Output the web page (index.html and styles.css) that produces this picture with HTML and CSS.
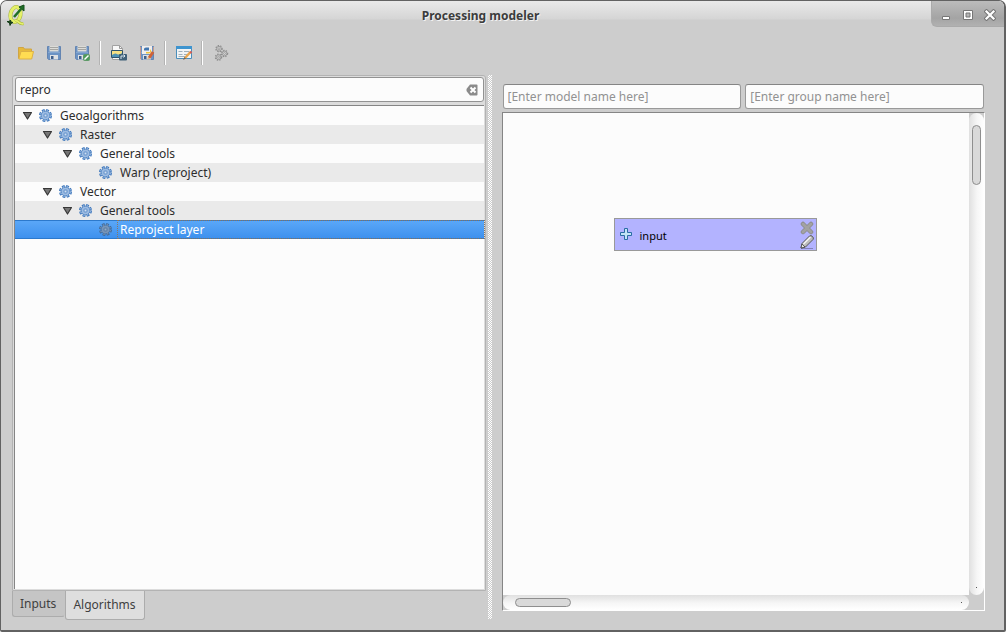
FILE: index.html
```html
<!DOCTYPE html>
<html lang="en">
<head>
<meta charset="utf-8">
<title>Processing modeler</title>
<link rel="stylesheet" href="styles.css">
</head>
<body>
<svg class="defs" aria-hidden="true">
  <symbol id="gear" viewBox="0 0 13 13">
    <circle cx="6.5" cy="6.5" r="5.3" fill="none" stroke="#3f78bd" stroke-width="2.4" stroke-dasharray="2.7 1.463"/>
    <circle cx="6.5" cy="6.5" r="4.4" fill="#9dbce2" stroke="#4a80c1"/>
    <circle cx="6.5" cy="6.5" r="4.9" fill="none" stroke="#9dbce2" stroke-width="1.4" stroke-dasharray="1.1 2.748" stroke-dashoffset="-.7"/>
    <rect x="5" y="5" width="3" height="3" rx=".8" fill="#cfe0f2" stroke="#5c8cc8"/>
  </symbol>
  <symbol id="arrow" viewBox="0 0 11 9">
    <path d="M1.5 1.5h8L5.5 8z" fill="#777" stroke="#383838" stroke-width="1.2" stroke-linejoin="round"/>
  </symbol>
  <symbol id="floppy" viewBox="0 0 16 16">
    <path d="M1.5 1.5h13v13H2.6l-1.1-1.1z" fill="#6c93c4" stroke="#6485b2"/>
    <path d="M3.5 1h9v5.5h-9z" fill="#dcdcd8"/>
    <path d="M4 2.5h8M4 4.5h8" stroke="#a5a5a2"/>
    <path d="M2 7.5h12" stroke="#83a6d0"/>
    <path d="M4 10h8v4.5H4z" fill="#dfe1e3"/>
    <path d="M5 11h2.5v3H5z" fill="#3e5f8c"/>
  </symbol>
</svg>
<div class="window">
  <header class="titlebar">
    <svg class="logo" viewBox="0 0 20 22">
      <ellipse cx="8.5" cy="10.500" rx="5" ry="7.500" transform="rotate(12 8.500 10.500)" fill="none" stroke="#a5b13c" stroke-width="4"/>
      <ellipse cx="8.5" cy="10.500" rx="5" ry="7.500" transform="rotate(12 8.500 10.500)" fill="none" stroke="#e4f06a" stroke-width="3"/>
      <path d="M8 16.500c3-1 4 4.500 8.500 3" fill="none" stroke="#a5b13c" stroke-width="3"/>
      <path d="M8 16.500c3-1 4 4.500 8.500 3" fill="none" stroke="#e4f06a" stroke-width="2"/>
      <path d="M7 13L14 5" stroke="#1f7026" stroke-width="2.500"/>
      <path d="M17 1v6l-5-4z" fill="#1f7026" stroke="#174f1c"/>
      <path d="M0 17.500h2l1.500-1.500.5 2 2 .5-2 1-1 2-.5-2.500z" fill="#173f1a" stroke="#173f1a"/>
    </svg>
    <h1 class="title">Processing modeler</h1>
    <div class="window-buttons">
      <button aria-label="Minimize"><svg viewBox="0 0 12 12"><path d="M2.500 7.500h7v3h-7z" fill="#fff" stroke="#777"/></svg></button>
      <button aria-label="Maximize"><svg viewBox="0 0 12 12"><path d="M1.500 1.500h9v9h-9z" fill="#fff" stroke="#777"/><path d="M4 4h4v4H4z" fill="#b5b5b5" stroke="#777"/></svg></button>
      <button aria-label="Close"><svg viewBox="0 0 12 12"><path d="M2.500 2.500l7 7m0-7l-7 7" stroke="#777" stroke-width="4.200" stroke-linecap="square"/><path d="M2.500 2.500l7 7m0-7l-7 7" stroke="#fff" stroke-width="2.200" stroke-linecap="square"/></svg></button>
    </div>
  </header>

  <nav class="toolbar" aria-label="Model tools">
    <button aria-label="Open model"><svg viewBox="0 0 16 16"><path d="M.5 13.500v-11h5l1 1.500h7v3" fill="#e6b93c" stroke="#cfa544"/><path d="M.800 14L3 6.500h12.500l-1.800 7.500z" fill="#ffdc52" stroke="#dcb145"/></svg></button>
    <button aria-label="Save model"><svg><use href="#floppy"/></svg></button>
    <button aria-label="Save model as"><svg viewBox="0 0 16 16"><use href="#floppy"/><rect x="9.500" y="9.500" width="6" height="6" rx="1" fill="#4d9a5b" stroke="#5f9a68"/><path d="M10.500 14.500l4-4" stroke="#fff" stroke-width="1.500"/></svg></button>
    <span class="separator"></span>
    <button aria-label="Export as image"><svg viewBox="0 0 16 16"><path d="M1.500.500h7l3 3v11h-10z" fill="#f8f8f8" stroke="#a2a2a2"/><path d="M8.500.500v3h3" fill="none" stroke="#999"/><path d="M.5 5.500h11v7H.500z" fill="#f5df83" stroke="#2d536d"/><path d="M1 10q3-2.500 5-1t5-1v4H1z" fill="#4d91b5"/><rect x="8" y="9" width="8" height="6.500" rx="1" fill="#3f6079"/><path d="M10 14v-3h4m-1.500-1.500l1.500 1.500-1.500 1.500" fill="none" stroke="#d7e5ee"/></svg></button>
    <button aria-label="Export as Python script"><svg viewBox="0 0 16 16"><use href="#floppy"/><path d="M3 1h10v8H3z" fill="#f0eeee"/><path d="M5 5.500V4q0-1.500 2-1.500h3v3z" fill="#4277b0"/><path d="M7 7h4V4q3 3-1 4.500H7z" fill="#edc43f"/><path d="M14 7L10 13" stroke="#d06238" stroke-width="3"/><path d="M9 12l-1 3 3-1.500z" fill="#e2b78e"/><path d="M1.500 2v12M14.500 2v5" stroke="#c89a8c"/></svg></button>
    <span class="separator"></span>
    <button aria-label="Edit model help"><svg viewBox="0 0 16 16"><path d="M.5 1.500h15v12H.500z" fill="#f1f4f5" stroke="#4a8ebb"/><path d="M0 1h16v3H0z" fill="#3e94cf"/><path d="M2.500 6.500h4m1.500 0h5m-10.500 3h4m1.500 0h4m-9.500 2h7" stroke="#9eb0bb"/><path d="M14.500 7L9 13" stroke="#e8a64e" stroke-width="2.500"/><path d="M14 6.500l1.500 1.500" stroke="#d35c56" stroke-width="2"/><path d="M8.500 12l-1.500 3 3-1.500z" fill="#76604b"/></svg></button>
    <span class="separator"></span>
    <button aria-label="Run model"><svg viewBox="0 0 16 16" fill="#d0d0d0" stroke="#8e8e8e"><g stroke-dasharray="1.300 1.200" stroke-width="1.500"><circle cx="6" cy="3.700" r="3"/><circle cx="11.500" cy="8.500" r="3"/><circle cx="5.500" cy="12.200" r="3"/></g><g stroke-width=".8"><circle cx="6" cy="3.700" r="2.400"/><circle cx="11.500" cy="8.500" r="2.400"/><circle cx="5.500" cy="12.200" r="2.400"/></g><g fill="#eee" stroke-width=".8"><circle cx="6" cy="3.700" r=".9"/><circle cx="11.500" cy="8.500" r=".9"/><circle cx="5.500" cy="12.200" r=".9"/></g></svg></button>
  </nav>

  <main class="workspace">
    <section class="palette">
      <div class="palette-page">
        <div class="search">
          <input type="text" value="repro" aria-label="Search algorithms">
          <button aria-label="Clear search"><svg viewBox="0 0 12 12"><path d="M4 .5h6.500q1 0 1 1v9q0 1-1 1H4L.500 7V5z" fill="#8b8b8b"/><path d="M4.500 3.500l5 5m0-5l-5 5" stroke="#fff" stroke-width="2"/></svg></button>
        </div>
        <ul class="tree" role="tree" aria-label="Algorithms">
          <li class="row level-0" role="treeitem" aria-level="1"><button class="toggle" aria-label="Collapse"><svg><use href="#arrow"/></svg></button><svg class="gear"><use href="#gear"/></svg><span class="label">Geoalgorithms</span></li>
          <li class="row level-1" role="treeitem" aria-level="2"><button class="toggle" aria-label="Collapse"><svg><use href="#arrow"/></svg></button><svg class="gear"><use href="#gear"/></svg><span class="label">Raster</span></li>
          <li class="row level-2" role="treeitem" aria-level="3"><button class="toggle" aria-label="Collapse"><svg><use href="#arrow"/></svg></button><svg class="gear"><use href="#gear"/></svg><span class="label">General tools</span></li>
          <li class="row leaf" role="treeitem" aria-level="4"><svg class="gear"><use href="#gear"/></svg><span class="label">Warp (reproject)</span></li>
          <li class="row level-1" role="treeitem" aria-level="2"><button class="toggle" aria-label="Collapse"><svg><use href="#arrow"/></svg></button><svg class="gear"><use href="#gear"/></svg><span class="label">Vector</span></li>
          <li class="row level-2" role="treeitem" aria-level="3"><button class="toggle" aria-label="Collapse"><svg><use href="#arrow"/></svg></button><svg class="gear"><use href="#gear"/></svg><span class="label">General tools</span></li>
          <li class="row leaf selected" role="treeitem" aria-level="4" aria-selected="true"><svg class="gear"><use href="#gear"/></svg><span class="label">Reproject layer</span></li>
        </ul>
      </div>
      <div class="tabs" role="tablist">
        <button class="tab" role="tab" aria-selected="false">Inputs</button>
        <button class="tab active" role="tab" aria-selected="true">Algorithms</button>
      </div>
    </section>

    <div class="splitter" role="separator" aria-orientation="vertical"></div>

    <section class="editor">
      <div class="names">
        <input type="text" placeholder="[Enter model name here]" aria-label="Model name">
        <input type="text" placeholder="[Enter group name here]" aria-label="Group name">
      </div>
      <div class="viewport">
        <div class="canvas">
          <div class="node">
            <svg class="plus" viewBox="0 0 12 12"><path d="M4.500.500h3v4h4v3h-4v4h-3v-4h-4v-3h4z" fill="#c2e4f6" stroke="#2b6ca5"/></svg>
            <span class="node-label">input</span>
            <span class="node-actions">
              <button aria-label="Delete input"><svg viewBox="0 0 14 14"><path d="M3 3l8 8m0-8l-8 8" stroke="#8a8a8a" stroke-width="4.500" stroke-linecap="round"/><path d="M3 3l8 8m0-8l-8 8" stroke="#a2a2a2" stroke-width="3" stroke-linecap="round"/></svg></button>
              <button aria-label="Edit input"><svg viewBox="0 0 14 14"><path d="M1 13.500h12" stroke="#8383b8"/><path d="M1 13l1-4.500L9.500 1q1.500-1 3 .5t.5 3L5.500 12z" fill="#bdbdbd" stroke="#555"/><path d="M3.500 9l7-7" stroke="#f5f5f5" stroke-width="1.500"/><path d="M2 9l3 3-4 1z" fill="#eee" stroke="#444" stroke-width=".8"/></svg></button>
            </span>
          </div>
        </div>
        <div class="scrollbar vertical"><span class="thumb"></span><span class="dot"></span></div>
        <div class="scrollbar horizontal"><span class="thumb"></span><span class="dot"></span></div>
        <div class="corner"></div>
      </div>
    </section>
  </main>
</div>
</body>
</html>
```
FILE: styles.css
```css
* { box-sizing: border-box; }

body {
  margin: 0;
  background: #fff;
  color: #2d2d2d;
  font: 12px/18px "Noto Sans", "Open Sans", sans-serif;
}

button, input { font: inherit; color: inherit; }
button { padding: 0; border: 0; background: none; }
svg { display: block; }
.defs { position: absolute; width: 0; height: 0; }

.window {
  display: flex;
  flex-direction: column;
  min-height: 100vh;
  border: 1px solid #626262;
  border-bottom-width: 2px;
  border-right-width: 2px;
  border-radius: 7px 7px 2px 2px;
  background: #cdcdcd;
  overflow: hidden;
}

/* Title bar */
.titlebar {
  display: grid;
  grid-template-columns: 74px 1fr 73px;
  align-items: start;
  height: 32px;
  background: linear-gradient(#e9e9e9, #d5d5d5 18px, #cdcdcd 19px);
}
.logo { width: 20px; height: 22px; margin: 3px 0 0 6px; }
.title {
  margin: 0;
  padding: 6px 45px 0 0;
  font-size: 12px;
  line-height: 18px;
  font-weight: 700;
  text-align: center;
  color: #3c3c3c;
  text-shadow: 1px 1px #f2f2f2;
}
.window-buttons {
  display: flex;
  align-items: flex-start;
  justify-content: flex-end;
  gap: 10px;
  height: 26px;
  padding: 8px 8px 0 0;
  border: 1px solid #aaa;
  border-width: 0 0 1px 1px;
  border-radius: 0 0 0 6px;
  background: linear-gradient(#bcbcbc, #a4a4a4 17px, #b1b1b1);
}
.window-buttons svg { width: 12px; height: 12px; }

/* Toolbar */
.toolbar {
  display: flex;
  align-items: center;
  height: 40px;
  padding-left: 11px;
}
.toolbar button { padding: 0 6px; }
.toolbar svg { width: 16px; height: 16px; }
.separator {
  width: 2px;
  height: 24px;
  margin: 0 4px 0 3px;
  border-left: 1px solid #b3b3b3;
  border-right: 1px solid #fff;
}

/* Workspace */
.workspace { flex: 1; display: flex; padding: 2px 19px 11px 11px; }

.palette { flex: 474 1 0; display: flex; flex-direction: column; }
.palette-page {
  flex: 1;
  display: flex;
  flex-direction: column;
  gap: 3px;
  padding: 1px;
  border: 1px solid #b3b3b3;
  border-radius: 3px 3px 0 0;
  background: #dcdcdc;
}
.search {
  display: flex;
  align-items: center;
  height: 25px;
  margin-left: 1px;
  padding-right: 5px;
  border: 1px solid #929292;
  border-radius: 3px;
  background: #fcfcfc;
}
.search input {
  flex: 1;
  min-width: 0;
  padding: 0 4px;
  border: 0;
  outline: 0;
  background: none;
}
.search svg { width: 12px; height: 12px; }

.tree {
  flex: 1;
  margin: 0;
  padding: 0;
  border-top: 1px solid #858585;
  border-left: 1px solid #858585;
  background: #fcfcfc;
  list-style: none;
}
.row { display: flex; align-items: center; height: 19px; }
.row:nth-child(even) { background: #eaeaea; }
.level-0 { padding-left: 7px; }
.level-1 { padding-left: 27px; }
.level-2 { padding-left: 47px; }
.leaf { padding-left: 84px; }
.toggle { margin-right: 6px; }
.toggle svg { width: 11px; height: 9px; }
.gear { width: 13px; height: 13px; margin-bottom: 1px; }
.label { flex: 1; padding-left: 8px; line-height: 17px; }
.selected {
  border-top: 1px solid #2c79cc;
  border-bottom: 1px solid #2c79cc;
  background: linear-gradient(#5aa7f8, #3e91ee);
  color: #fff;
}
.selected .gear { filter: brightness(0.8) saturate(0.7); opacity: 0.8; }
.selected .label {
  margin-left: 6px;
  padding-left: 2px;
  outline: 1px dotted #8a7764;
}

.tabs { display: flex; align-items: flex-start; height: 28px; color: #3f3f3f; }
.tab {
  height: 26px;
  padding: 0 8px 0 7px;
  border: 1px solid #acacac;
  border-top: 0;
  border-radius: 0 0 3px 3px;
  background: #c5c5c5;
}
.tab:not(.active) { border-right-color: #c5c5c5; }
.tab.active { height: 29px; background: #dedede; }

.splitter {
  width: 4px;
  margin: 0 1px 0 2px;
  background: repeating-conic-gradient(#fff 0 25%, #cdcdcd 0 50%) 0 0 / 4px 4px;
  background: conic-gradient(#fff 25%, #cdcdcd 0 50%, #fff 0 75%, #cdcdcd 0) 0 0 / 2px 2px;
}

/* Model editor */
.editor { flex: 484 1 0; display: flex; flex-direction: column; gap: 3px; margin-left: 9px; padding: 9px 0 8px; }
.names { display: flex; gap: 4px; padding: 0 1px; }
.names input {
  flex: 1;
  min-width: 0;
  height: 25px;
  padding: 0 4px;
  border: 1px solid #999;
  border-top-color: #858585;
  border-radius: 3px;
  background: #fcfcfc;
}
.names input::placeholder { color: #929292; opacity: 1; }

.viewport {
  flex: 1;
  display: grid;
  grid-template-columns: 1fr 15px;
  grid-template-rows: 1fr 15px;
  border: 1px solid #858585;
  border-right-color: #fff;
  border-bottom-color: #fff;
}
.canvas { position: relative; background: #fcfcfc; }
.node {
  position: absolute;
  left: 111px;
  top: 105px;
  display: flex;
  align-items: center;
  width: 203px;
  height: 33px;
  padding: 0 2px 0 5px;
  border: 1px solid #999;
  background: #b3b3ff;
  color: #000;
}
.plus { width: 12px; height: 12px; margin-bottom: 2px; }
.node-label { flex: 1; padding: 2px 0 0 8px; font-size: 11px; }
.node-actions { display: flex; flex-direction: column; }
.node-actions svg { width: 14px; height: 14px; }

.scrollbar { display: flex; justify-content: space-between; align-items: center; border-radius: 8px; }
.vertical {
  flex-direction: column;
  padding: 12px 0 7px;
  background: linear-gradient(90deg, #e0e0e0, #f6f6f6 8px, #fff);
}
.horizontal {
  padding: 0 7px 0 12px;
  background: linear-gradient(#e0e0e0, #f6f6f6 8px, #fff);
}
.thumb { border: 1px solid #8e8e8e; border-radius: 5px; background: #d9d9d9; }
.vertical .thumb { width: 9px; height: 60px; }
.horizontal .thumb { width: 56px; height: 9px; }
.dot { width: 1px; height: 1px; background: #555; }
.corner { background: #cdcdcd; }
```
